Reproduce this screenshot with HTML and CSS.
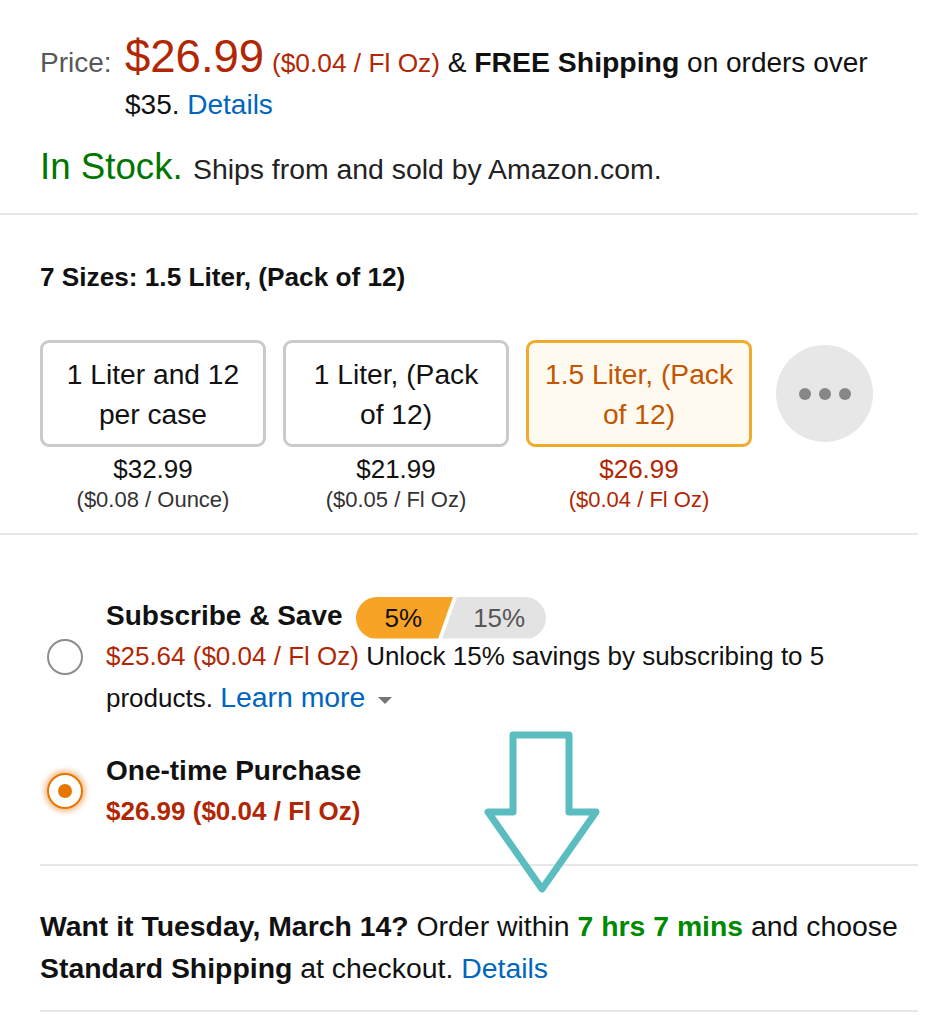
FILE: index.html
```html
<!DOCTYPE html>
<html lang="en">
<head>
<meta charset="utf-8">
<title>Buy box</title>
<link rel="stylesheet" href="styles.css">
</head>
<body>
<div class="page">
  <section class="price-block">
    <div class="price-row">
      <span class="price-label">Price:</span>
      <div class="price-value"><span class="price-big">$26.99</span> <span class="price-unit">($0.04 / Fl Oz)</span> &amp; <b>FREE Shipping</b> on orders over $35. <a class="link" href="#">Details</a></div>
    </div>
    <div class="stock"><span class="in-stock">In Stock.</span> <span class="ships">Ships from and sold by Amazon.com.</span></div>
  </section>
  <div class="rule rule-top"></div>
  <section class="sizes">
    <div class="sizes-label">7 Sizes: 1.5 Liter, (Pack of 12)</div>
    <div class="swatches">
      <div class="swatch">
        <div class="swatch-box">1 Liter and 12<br>per case</div>
        <div class="swatch-price">$32.99</div>
        <div class="swatch-unit">($0.08 / Ounce)</div>
      </div>
      <div class="swatch">
        <div class="swatch-box">1 Liter, (Pack<br>of 12)</div>
        <div class="swatch-price">$21.99</div>
        <div class="swatch-unit">($0.05 / Fl Oz)</div>
      </div>
      <div class="swatch swatch-selected">
        <div class="swatch-box">1.5 Liter, (Pack<br>of 12)</div>
        <div class="swatch-price">$26.99</div>
        <div class="swatch-unit">($0.04 / Fl Oz)</div>
      </div>
      <div class="more"><span class="dot"></span><span class="dot"></span><span class="dot"></span></div>
    </div>
  </section>
  <div class="rule"></div>
  <section class="purchase">
    <div class="option">
      <span class="radio"></span>
      <div class="option-body">
        <div class="option-title">Subscribe &amp; Save<span class="badge"><span class="seg seg-on">5%</span><span class="seg seg-off">15%</span></span></div>
        <div class="option-text"><span class="red">$25.64 ($0.04 / Fl Oz)</span> Unlock 15% savings by subscribing to 5 products. <a class="link link-lg" href="#">Learn more</a><span class="caret"></span></div>
      </div>
    </div>
    <div class="option">
      <span class="radio radio-on"></span>
      <div class="option-body">
        <div class="option-title">One-time Purchase</div>
        <div class="option-text red bold">$26.99 ($0.04 / Fl Oz)</div>
      </div>
    </div>
  </section>
  <div class="rule rule-inset"></div>
  <section class="delivery">
    <b>Want it Tuesday, March 14?</b> Order within <b class="green">7 hrs 7 mins</b> and choose <b>Standard Shipping</b> at checkout. <a class="link" href="#">Details</a>
  </section>
  <div class="rule rule-inset"></div>
  <svg class="arrow" width="122" height="170" viewBox="0 0 122 170" aria-hidden="true">
    <polygon points="30,7 86,7 86,84 113,84 59,161 5,84 30,84" fill="none" stroke="#5bbdbf" stroke-width="7" stroke-linejoin="round"/>
  </svg>
</div>
</body>
</html>
```
FILE: styles.css
```css
body {
  margin: 0;
  background: #fff;
  color: #111;
  font-family: "Liberation Sans", Arial, sans-serif;
}

.page {
  position: relative;
  width: 918px;
}

.link {
  color: #0066c0;
  text-decoration: none;
}

.red {
  color: #b12704;
}

.bold {
  font-weight: bold;
}

.green {
  color: #008a00;
}

/* price block */
.price-block {
  padding: 36px 30px 0 40px;
}

.price-row {
  display: flex;
  align-items: baseline;
  font-size: 28px;
  line-height: 42px;
}

.price-label {
  flex: 0 0 85px;
  color: #565959;
}

.price-value {
  flex: 1;
}

.price-value b {
  font-size: 28.4px;
}

.price-big {
  font-size: 45.5px;
  color: #b12704;
}

.price-unit {
  font-size: 26.3px;
  color: #b12704;
}

.stock {
  margin-top: 17px;
  font-size: 36.7px;
  line-height: 48px;
}

.in-stock {
  color: #007600;
}

.ships {
  font-size: 28.4px;
  line-height: 1;
  color: #222;
}

.rule {
  height: 2px;
  background: #e7e7e7;
}

.rule-top {
  margin-top: 22px;
}

.rule-inset {
  margin-left: 40px;
}

/* sizes */
.sizes {
  padding: 47px 0 20px 40px;
}

.sizes-label {
  font-size: 26.2px;
  font-weight: bold;
  line-height: 30px;
}

.swatches {
  display: flex;
  align-items: flex-start;
  gap: 17px;
  margin-top: 48px;
}

.swatch {
  width: 226px;
  text-align: center;
}

.swatch-box {
  height: 107px;
  box-sizing: border-box;
  border: 3px solid #cacaca;
  border-radius: 9px;
  padding: 0 8px;
  display: flex;
  align-items: center;
  justify-content: center;
  font-size: 28.2px;
  line-height: 40px;
  background: #fff;
  white-space: nowrap;
}

.swatch-selected .swatch-box {
  border-color: #f0ab2c;
  background: #fffaf0;
  color: #c45500;
}

.swatch-price {
  margin-top: 6px;
  font-size: 26px;
  line-height: 32px;
}

.swatch-unit {
  margin-top: 2px;
  font-size: 22px;
  line-height: 26px;
  color: #333;
}

.swatch-selected .swatch-price,
.swatch-selected .swatch-unit {
  color: #b12704;
}

.more {
  flex: none;
  width: 97px;
  height: 97px;
  margin: 5px 0 0 7px;
  border-radius: 50%;
  background: #e7e7e7;
  display: flex;
  align-items: center;
  justify-content: center;
  gap: 8px;
}

.dot {
  width: 12px;
  height: 12px;
  border-radius: 50%;
  background: #878787;
}

/* purchase options */
.purchase {
  padding: 60px 0 32px 47px;
}

.option {
  display: flex;
  align-items: center;
}

.option + .option {
  margin-top: 31px;
}

.radio {
  flex: none;
  width: 36px;
  height: 36px;
  box-sizing: border-box;
  border: 2px solid #8d8d8d;
  border-radius: 50%;
  margin-right: 23px;
  background: #fff;
  display: flex;
  align-items: center;
  justify-content: center;
}

.radio-on {
  border-color: #e77600;
  box-shadow: 0 0 5px 3px rgba(228, 121, 17, 0.45);
}

.radio-on::after {
  content: "";
  width: 14px;
  height: 14px;
  border-radius: 50%;
  background: #e77600;
}

.option-body {
  flex: 1;
  font-size: 26px;
  line-height: 41px;
}

.option-title {
  font-weight: bold;
  font-size: 28px;
}

.link-lg {
  font-size: 28.4px;
}

.badge {
  display: inline-flex;
  vertical-align: middle;
  margin: -4px 0 -4px 13px;
  font-weight: normal;
  font-size: 26px;
}

.seg {
  position: relative;
  z-index: 0;
  height: 42px;
  line-height: 42px;
}

.seg::before {
  content: "";
  position: absolute;
  inset: 0;
  z-index: -1;
}

.seg-on {
  padding: 0 31px 0 29px;
  color: #111;
}

.seg-on::before {
  background: #f7a326;
  border-radius: 21px 0 0 21px;
  clip-path: polygon(0 0, 100% 0, calc(100% - 15px) 100%, 0 100%);
}

.seg-off {
  margin-left: -11px;
  padding: 0 21px 0 31px;
  color: #565656;
}

.seg-off::before {
  background: #e3e3e3;
  border-radius: 0 21px 21px 0;
  clip-path: polygon(15px 0, 100% 0, 100% 100%, 0 100%);
}

.caret {
  display: inline-block;
  vertical-align: middle;
  margin-left: 13px;
  border-left: 7px solid transparent;
  border-right: 7px solid transparent;
  border-top: 7px solid #777;
}

/* delivery */
.delivery {
  padding: 39px 0 21px 40px;
  font-size: 28.4px;
  line-height: 42px;
}

/* annotation arrow */
.arrow {
  position: absolute;
  left: 483px;
  top: 728px;
}
```
